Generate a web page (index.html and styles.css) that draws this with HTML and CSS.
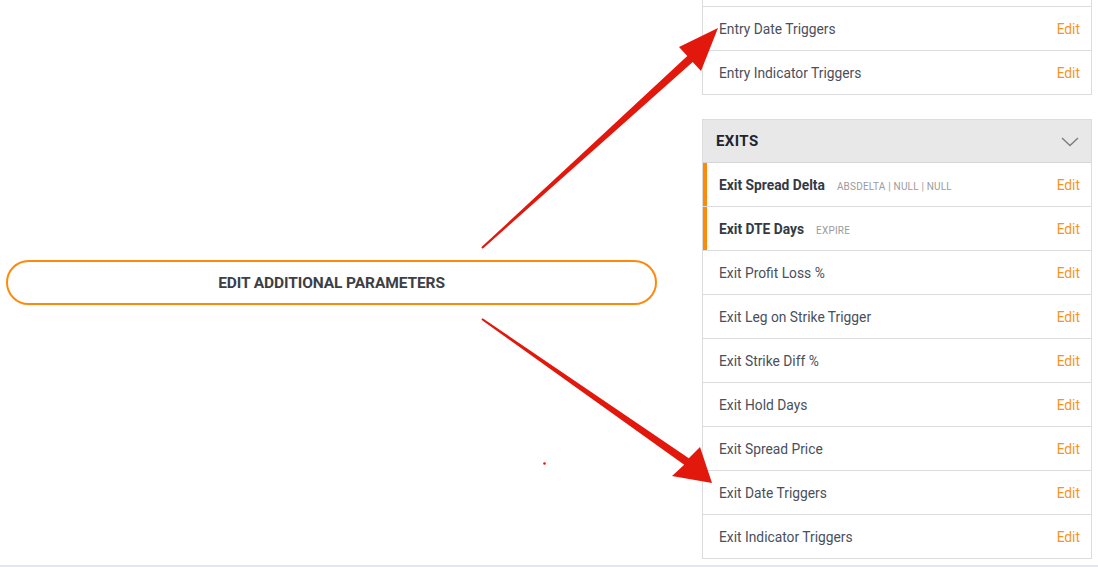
FILE: index.html
```html
<!DOCTYPE HTML>
<html>
<head>
  <title>Strategy Parameters</title>
  <meta name="viewport" content="width=device-width, initial-scale=1">
  <link rel="stylesheet" href="styles.css">
</head>
<body>
  <div class="page">
    <div class="content">
      <div class="left">
        <button class="btn-outline">EDIT ADDITIONAL PARAMETERS</button>
      </div>

      <div class="right">
        <div class="card">
          <div class="row"></div>
          <div class="row"><span class="name">Entry Date Triggers</span><a class="edit">Edit</a></div>
          <div class="row"><span class="name">Entry Indicator Triggers</span><a class="edit">Edit</a></div>
        </div>

        <div class="card exits">
          <div class="card-header">
            <span>EXITS</span>
            <svg class="chevron" width="18" height="10" viewBox="0 0 18 10"><path d="M1 1 L9 8.5 L17 1" fill="none" stroke="#7d7d7d" stroke-width="1.4"/></svg>
          </div>
          <div class="row active"><span class="name"><b>Exit Spread Delta</b><span class="tag">ABSDELTA | NULL | NULL</span></span><a class="edit">Edit</a></div>
          <div class="row active"><span class="name"><b>Exit DTE Days</b><span class="tag">EXPIRE</span></span><a class="edit">Edit</a></div>
          <div class="row"><span class="name">Exit Profit Loss %</span><a class="edit">Edit</a></div>
          <div class="row"><span class="name">Exit Leg on Strike Trigger</span><a class="edit">Edit</a></div>
          <div class="row"><span class="name">Exit Strike Diff %</span><a class="edit">Edit</a></div>
          <div class="row"><span class="name">Exit Hold Days</span><a class="edit">Edit</a></div>
          <div class="row"><span class="name">Exit Spread Price</span><a class="edit">Edit</a></div>
          <div class="row"><span class="name">Exit Date Triggers</span><a class="edit">Edit</a></div>
          <div class="row"><span class="name">Exit Indicator Triggers</span><a class="edit">Edit</a></div>
        </div>
      </div>
    </div>
    <div class="footer-line"></div>

    <!-- annotation arrows drawn over the page -->
    <svg class="arrows" width="1098" height="567" viewBox="0 0 1098 567">
      <polygon fill="#e3180c" points="481.3,247.3 687.3,56.1 679,47 718,28 701,71 692.7,61.9 482.7,248.7"/>
      <polygon fill="#e3180c" points="482.6,318.2 688.8,458.2 700,447 712,483 672,476 684.2,464.8 481.4,319.8"/>
      <circle cx="544.5" cy="463.5" r="1.3" fill="#e3180c"/>
    </svg>
  </div>
</body>
</html>
```

FILE: styles.css
```css
body { margin: 0; font-family: Roboto, "Liberation Sans", Arial, sans-serif; background: #fff; }
.page {
  position: relative;
  height: 567px;
  display: flex;
  flex-direction: column;
  overflow: hidden;
}
.content {
  flex: 1;
  display: flex;
  align-items: flex-start;
}
.left {
  align-self: stretch;
  width: 651px;
  margin-left: 6px;
  display: flex;
  align-items: center;
}
.btn-outline {
  width: 100%;
  height: 45px;
  border: 2px solid #ff8a0a;
  border-radius: 23px;
  background: #fff;
  color: #3c3f46;
  font-family: Roboto, "Liberation Sans", Arial, sans-serif;
  font-weight: bold;
  font-size: 15.5px;
  letter-spacing: -0.1px;
  cursor: pointer;
}
.right {
  width: 390px;
  margin-left: 45px;
  margin-top: -38px;
}
.card {
  border: 1px solid #dcdcdc;
  background: #fff;
}
.card + .card { margin-top: 24px; }
.card-header {
  height: 42px;
  background: #e8e8e8;
  display: flex;
  align-items: center;
  justify-content: space-between;
  padding: 0 12px 0 13px;
  border-bottom: 1px solid #d6d6d6;
  font-weight: bold;
  font-size: 15px;
  letter-spacing: 0.4px;
  color: #1f2530;
}
.chevron { margin-top: 1px; }
.row {
  height: 43px;
  display: flex;
  align-items: center;
  justify-content: space-between;
  padding: 0 11px 0 16px;
  border-top: 1px solid #dcdcdc;
  font-size: 13.8px;
  color: #4a4f5c;
}
.card-header + .row, .card .row:first-child { border-top: none; }
.row.active {
  box-shadow: inset 4px 0 0 #ff8a0a;
}
.row b { color: #343a45; }
.tag {
  margin-left: 12px;
  font-size: 10px;
  color: #9b9b9b;
  letter-spacing: 0.2px;
}
.edit {
  color: #f7941d;
  cursor: pointer;
}
.footer-line {
  height: 2px;
  background: #e3e6ec;
}
.arrows {
  position: absolute;
  left: 0;
  top: 0;
  pointer-events: none;
}
```
